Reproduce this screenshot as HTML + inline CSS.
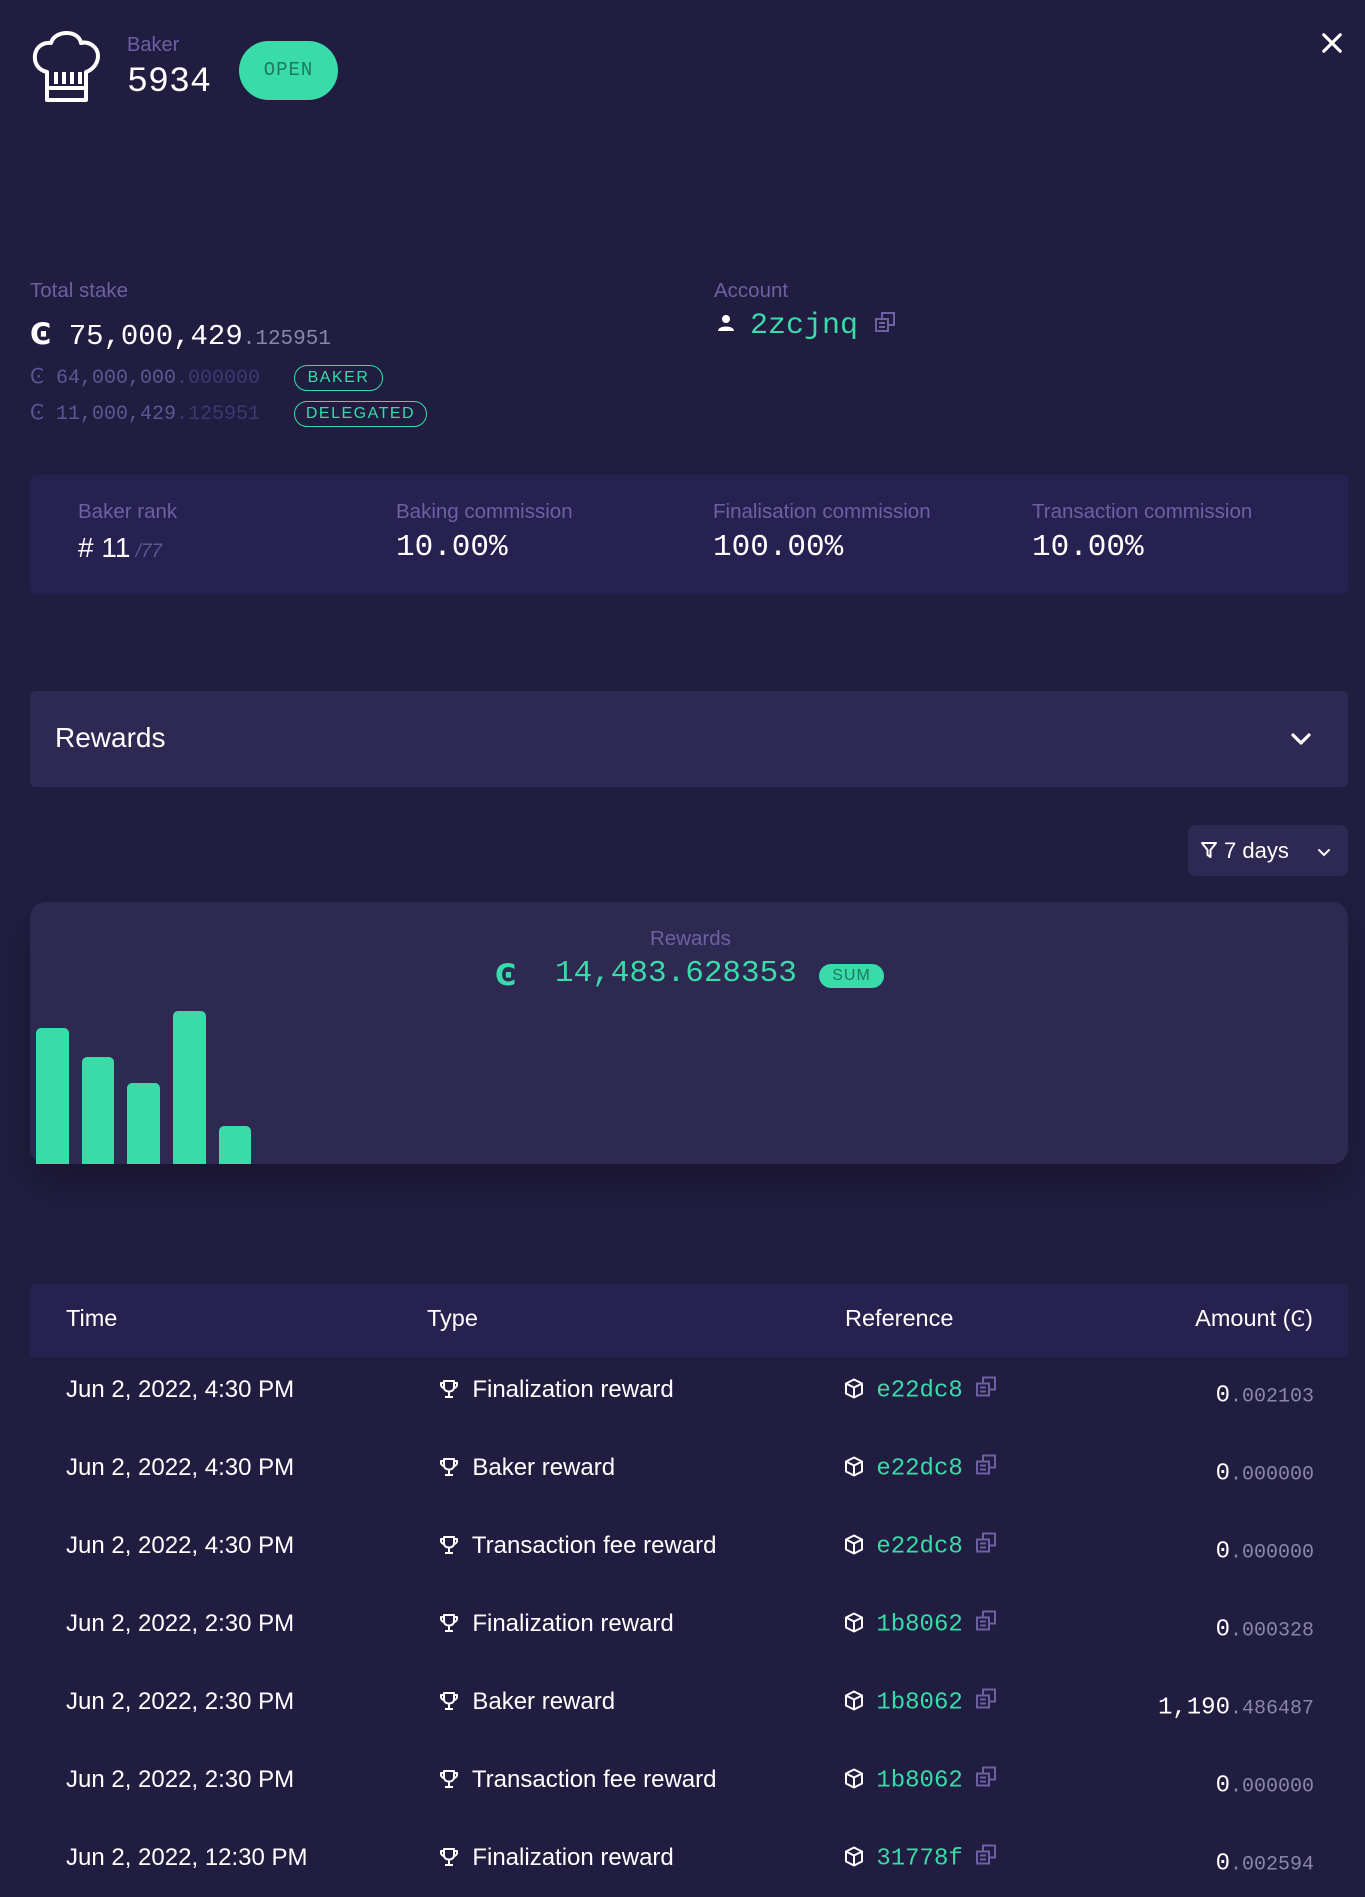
<!DOCTYPE html>
<html><head><meta charset="utf-8">
<style>
*{margin:0;padding:0;box-sizing:border-box}
body{width:1365px;height:1886px;background:#211d40;font-family:"Liberation Sans",sans-serif;color:#fff;position:relative;overflow:hidden}
.a{position:absolute;white-space:nowrap}
.mono{font-family:"Liberation Mono",monospace}
.cc{font-family:"DejaVu Sans",sans-serif}
.lbl{color:#6b61a3;font-size:20.5px}
.g{color:#39dba9}
.dim{color:#8a86a6}
.badge{position:absolute;border:1.5px solid #39dba9;border-radius:14px;color:#39dba9;font-size:16px;letter-spacing:1.5px;height:26px;line-height:23px;text-align:center}
.row{position:absolute;left:30px;width:1318px;height:78px;font-size:24px}
.row div{position:absolute;top:50%;transform:translateY(-50%);white-space:nowrap}
</style></head><body>

<svg class="a" style="left:30px;top:30px" width="72" height="76" viewBox="0 0 72 76" fill="none" stroke="#fff" stroke-width="4" stroke-linejoin="round">
<path d="M17 42 C8 40 4 33 5 25 C6 17 13 12 21 13 C23 6 30 3 37 3 C44 3 50 7 51 13 C59 11 68 17 68 26 C68 34 62 40 56 42 V70 H17 Z"/>
<path d="M17 58 H56 M26 42 V54 M34 42 V54 M42 42 V54 M50 42 V54"/>
</svg>
<div class="a lbl" style="left:127px;top:34px;font-size:20px">Baker</div>
<div class="a mono" style="left:127px;top:62px;font-size:35px">5934</div>
<div class="a mono" style="left:239px;top:41px;width:99px;height:59px;border-radius:30px;background:#39dba9;color:#1d7a5c;font-size:19px;text-align:center;line-height:59px;letter-spacing:1px">OPEN</div>
<svg class="a" style="left:1321px;top:32px" width="22" height="22" viewBox="0 0 24 24" stroke="#fff" stroke-width="3.4" stroke-linecap="round"><path d="M3 3L21 21M21 3L3 21"/></svg>

<div class="a lbl" style="left:30px;top:279px">Total stake</div>
<div class="a mono" style="left:30px;top:317px;font-size:29px"><span class="cc" style="font-weight:bold">Ͼ</span> 75,000,429<span class="dim" style="font-size:21px">.125951</span></div>
<div class="a mono" style="left:30px;top:364px;font-size:20px;color:#5e5694"><span class="cc">Ͼ</span> 64,000,000<span style="color:#3d3870">.000000</span></div>
<div class="a mono" style="left:30px;top:400px;font-size:20px;color:#5e5694"><span class="cc">Ͼ</span> 11,000,429<span style="color:#3d3870">.125951</span></div>
<div class="badge" style="left:294px;top:365px;width:89px">BAKER</div>
<div class="badge" style="left:294px;top:401px;width:133px">DELEGATED</div>

<div class="a lbl" style="left:714px;top:279px">Account</div>
<svg class="a" style="left:717px;top:314px" width="18" height="18" viewBox="0 0 18 18" fill="#fff"><circle cx="9" cy="5" r="4"/><path d="M1 17 C1 11 17 11 17 17Z"/></svg>
<div class="a mono g" style="left:750px;top:309px;font-size:30px">2zcjnq</div>
<svg class="a" style="left:875px;top:312px" width="20" height="20" viewBox="0 0 20 20" fill="none" stroke="#6b61a3" stroke-width="2"><rect x="1" y="7" width="12" height="12"/><path d="M7 7V1H19V13H13M4 11H10M4 15H10"/></svg>

<div class="a" style="left:30px;top:475px;width:1318px;height:119px;background:#262150;border-radius:6px"></div>
<div class="a lbl" style="left:78px;top:500px">Baker rank</div>
<div class="a" style="left:78px;top:532px;font-size:28px"># 11<span style="color:#5e5694;font-size:19px;font-style:italic"> /77</span></div>
<div class="a lbl" style="left:396px;top:500px">Baking commission</div>
<div class="a mono" style="left:396px;top:530px;font-size:31px">10.00%</div>
<div class="a lbl" style="left:713px;top:500px">Finalisation commission</div>
<div class="a mono" style="left:713px;top:530px;font-size:31px">100.00%</div>
<div class="a lbl" style="left:1032px;top:500px">Transaction commission</div>
<div class="a mono" style="left:1032px;top:530px;font-size:31px">10.00%</div>

<div class="a" style="left:30px;top:691px;width:1318px;height:96px;background:#2e2952;border-radius:6px"></div>
<div class="a" style="left:55px;top:722px;font-size:28px">Rewards</div>
<svg class="a" style="left:1289px;top:727px" width="24" height="24" viewBox="0 0 24 24" fill="none" stroke="#fff" stroke-width="3.2" stroke-linecap="round" stroke-linejoin="round"><path d="M4 8L12 16L20 8"/></svg>

<div class="a" style="left:1188px;top:825px;width:160px;height:51px;background:#2e2952;border-radius:8px"></div>
<svg class="a" style="left:1200px;top:841px" width="18" height="18" viewBox="0 0 18 18" fill="none" stroke="#fff" stroke-width="2" stroke-linejoin="round"><path d="M2 2H16L10.5 9V16L7.5 14V9Z"/></svg>
<div class="a" style="left:1224px;top:838px;font-size:22px">7 days</div>
<svg class="a" style="left:1317px;top:845px" width="14" height="14" viewBox="0 0 14 14" fill="none" stroke="#fff" stroke-width="2" stroke-linecap="round"><path d="M2 5L7 10L12 5"/></svg>

<div class="a" style="left:30px;top:902px;width:1318px;height:262px;background:#2d2950;border-radius:16px;box-shadow:0 20px 40px rgba(0,0,0,0.25)"></div>
<div class="a lbl" style="left:650px;top:927px">Rewards</div>
<div class="a cc g" style="left:495px;top:958px;font-size:29px;font-weight:bold">Ͼ</div>
<div class="a mono g" style="left:555px;top:956px;font-size:31px">14,483.628353</div>
<div class="a" style="left:819px;top:964px;width:65px;height:24px;background:#39dba9;border-radius:12px;color:#1d7a5c;font-size:16px;text-align:center;line-height:24px;letter-spacing:1px">SUM</div>
<div class="a" style="left:36px;top:1028px;width:33px;height:136px;background:#39dba9;border-radius:5px 5px 0 0"></div>
<div class="a" style="left:82px;top:1057px;width:32px;height:107px;background:#39dba9;border-radius:5px 5px 0 0"></div>
<div class="a" style="left:127px;top:1083px;width:33px;height:81px;background:#39dba9;border-radius:5px 5px 0 0"></div>
<div class="a" style="left:173px;top:1011px;width:33px;height:153px;background:#39dba9;border-radius:5px 5px 0 0"></div>
<div class="a" style="left:219px;top:1126px;width:32px;height:38px;background:#39dba9;border-radius:5px 5px 0 0"></div>

<div class="a" style="left:30px;top:1284px;width:1318px;height:73px;background:#26214f;border-radius:6px 6px 0 0"></div>
<div class="a" style="left:66px;top:1305px;font-size:23.5px">Time</div>
<div class="a" style="left:427px;top:1305px;font-size:23.5px">Type</div>
<div class="a" style="left:845px;top:1305px;font-size:23.5px">Reference</div>
<div class="a" style="right:52px;top:1305px;font-size:23.5px">Amount (<span class="cc" style="font-size:21px">Ͼ</span>)</div>

<div id="rows"></div>
<script>
var d=[["Jun 2, 2022, 4:30 PM","Finalization reward","e22dc8","0",".002103"],
["Jun 2, 2022, 4:30 PM","Baker reward","e22dc8","0",".000000"],
["Jun 2, 2022, 4:30 PM","Transaction fee reward","e22dc8","0",".000000"],
["Jun 2, 2022, 2:30 PM","Finalization reward","1b8062","0",".000328"],
["Jun 2, 2022, 2:30 PM","Baker reward","1b8062","1,190",".486487"],
["Jun 2, 2022, 2:30 PM","Transaction fee reward","1b8062","0",".000000"],
["Jun 2, 2022, 12:30 PM","Finalization reward","31778f","0",".002594"]];
var trophy='<svg width="20" height="20" viewBox="0 0 20 20" fill="none" stroke="#fff" stroke-width="2" stroke-linejoin="round" style="vertical-align:-2px"><path d="M5 2H15V8C15 11 13 12.5 10 12.5C7 12.5 5 11 5 8Z"/><path d="M5 4H2V6C2 8 4 9 5 9M15 4H18V6C18 8 16 9 15 9M10 12.5V17M6 18H14"/></svg>';
var cube='<svg width="18" height="20" viewBox="0 0 18 20" fill="none" stroke="#fff" stroke-width="2" stroke-linejoin="round" style="vertical-align:-2px"><path d="M9 1L17 5V15L9 19L1 15V5Z"/><path d="M1 5L9 9L17 5M9 9V19"/></svg>';
var copy='<svg width="20" height="20" viewBox="0 0 20 20" fill="none" stroke="#6b61a3" stroke-width="2" style="vertical-align:0px"><rect x="1" y="7" width="12" height="12"/><path d="M7 7V1H19V13H13M4 11H10M4 15H10"/></svg>';
var h='';
d.forEach(function(r,i){var t=1351+i*78;
h+='<div class="row" style="top:'+t+'px"><div style="left:36px">'+r[0]+'</div><div style="left:409px">'+trophy+'&nbsp; '+r[1]+'</div><div style="left:815px">'+cube+'&nbsp;&nbsp;<span class="mono g" style="font-size:24px">'+r[2]+'</span>&nbsp; '+copy+'</div><div class="mono" style="right:34px;top:58%;font-size:24px">'+r[3]+'<span class="dim" style="font-size:20px">'+r[4]+'</span></div></div>';});
document.getElementById('rows').innerHTML=h;
</script>
</body></html>
